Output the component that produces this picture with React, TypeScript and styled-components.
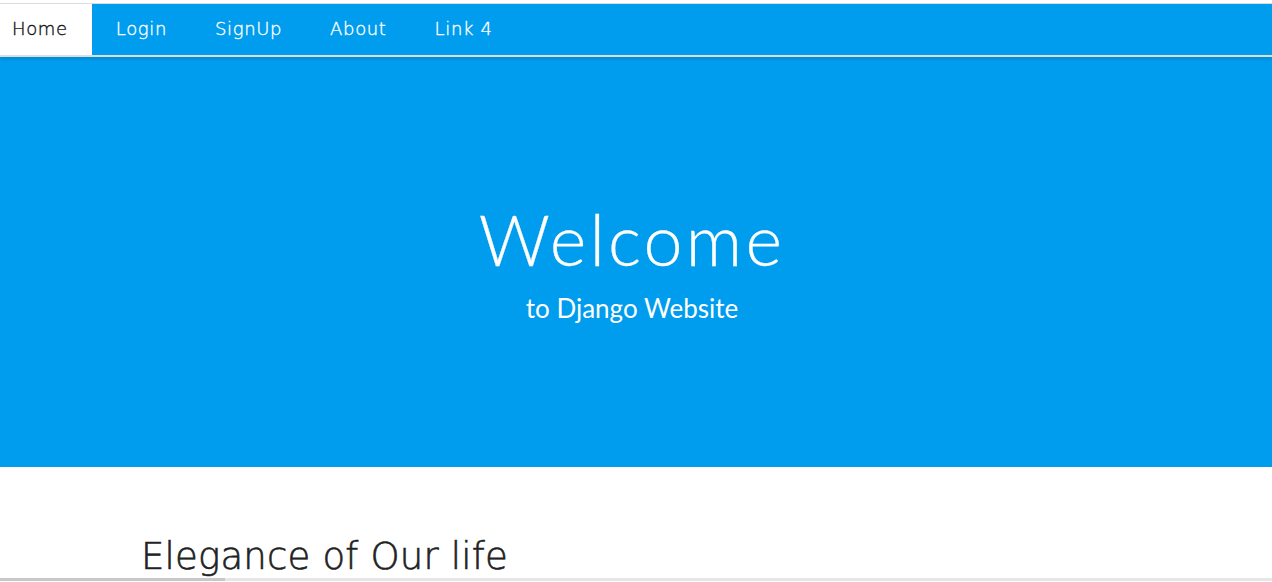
import React from "react";
import styled, { createGlobalStyle } from "styled-components";

const GlobalStyle = createGlobalStyle`
  html, body {
    margin: 0;
    padding: 0;
    background: #ffffff;
    overflow: hidden;
  }
  body {
    font-family: "DejaVu Sans", "Liberation Sans", sans-serif;
  }
`;

const BLUE = "#009cee";

const Page = styled.div`
  border-top: 3px solid #ffffff;
  display: flex;
  flex-direction: column;
`;

const NavBar = styled.nav`
  display: flex;
  align-items: stretch;
  height: 51px;
  background: ${BLUE};
  border-top: 1px solid #dcdcdc;
  border-bottom: 2px solid #dedede;
  box-shadow: 0 2px 3px rgba(0, 0, 0, 0.12);
  position: relative;
  z-index: 1;
`;

const NavItem = styled.a<{ $active?: boolean }>`
  display: flex;
  align-items: center;
  padding: 0 24px 2px;
  padding-left: ${(p) => (p.$active ? "12px" : "24px")};
  font-size: 18px;
  font-weight: 200;
  letter-spacing: 0.65px;
  -webkit-text-stroke: 0.35px currentColor;
  text-decoration: none;
  color: ${(p) => (p.$active ? "#111111" : "#ffffff")};
  background: ${(p) => (p.$active ? "#ffffff" : "transparent")};
  cursor: pointer;
`;

const Hero = styled.header`
  height: 410px;
  background: ${BLUE};
  display: flex;
  flex-direction: column;
  align-items: center;
  justify-content: center;
  padding-right: 8px;
  padding-top: 1px;
  box-sizing: border-box;
  color: #ffffff;
`;

const HeroTitle = styled.h1`
  margin: 0;
  font-family: Lato, "Open Sans", sans-serif;
  font-weight: 300;
  font-size: 70px;
  letter-spacing: 3.2px;
  line-height: 1;
  -webkit-text-stroke: 0.3px currentColor;
`;

const HeroSub = styled.p`
  margin: 21px 0 0;
  font-family: Lato, "Open Sans", sans-serif;
  font-weight: 400;
  font-size: 26px;
  line-height: 1;
`;

const Section = styled.section`
  padding: 68px 141px 0;
`;

const SectionTitle = styled.h2`
  margin: 0;
  font-weight: 200;
  font-size: 37px;
  letter-spacing: 0.2px;
  -webkit-text-stroke: 0.6px currentColor;
  color: #222222;
  line-height: 1.2;
`;

const ScrollTrack = styled.div`
  position: fixed;
  left: 0;
  right: 0;
  bottom: 1px;
  height: 3px;
  background: #e6e6e6;
`;

const ScrollThumb = styled.div`
  width: 225px;
  height: 100%;
  background: #c8c8c8;
`;

const links = ["Home", "Login", "SignUp", "About", "Link 4"];

export default function App() {
  return (
    <>
      <GlobalStyle />
      <Page>
        <NavBar>
          {links.map((l, i) => (
            <NavItem key={l} $active={i === 0}>
              {l}
            </NavItem>
          ))}
        </NavBar>
        <Hero>
          <HeroTitle>Welcome</HeroTitle>
          <HeroSub>to Django Website</HeroSub>
        </Hero>
        <Section>
          <SectionTitle>Elegance of Our life</SectionTitle>
        </Section>
      </Page>
      <ScrollTrack>
        <ScrollThumb />
      </ScrollTrack>
    </>
  );
}
